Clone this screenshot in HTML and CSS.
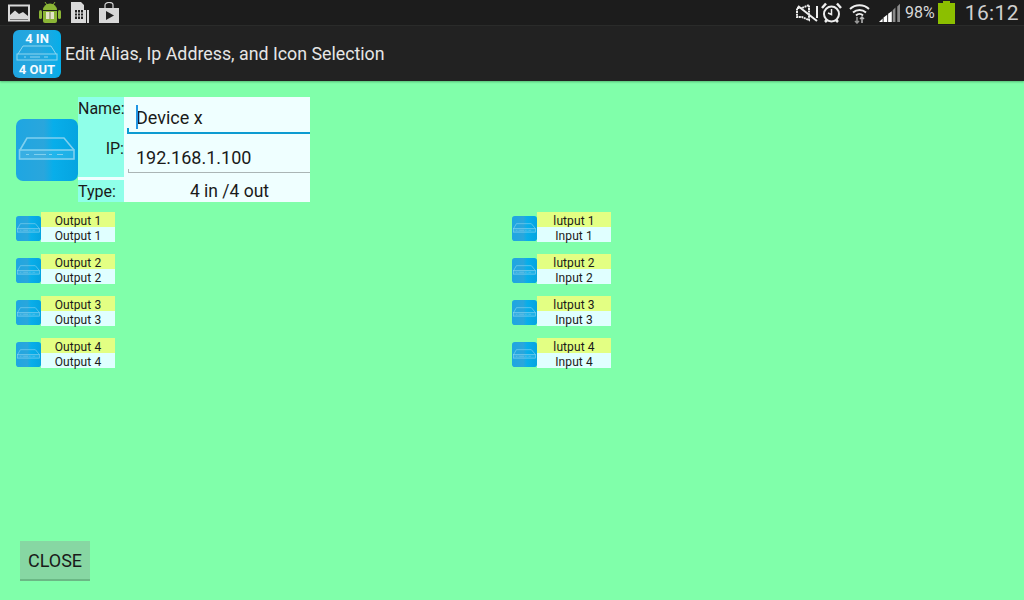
FILE: index.html
```html
<!DOCTYPE html>
<html lang="en">
<head>
<meta charset="utf-8">
<title>Edit Alias</title>
<link rel="stylesheet" href="styles.css">
</head>
<body>
<svg class="defs" width="0" height="0" aria-hidden="true">
  <defs>
    <linearGradient id="blue" x1="0" x2="1" y1="0" y2="0">
      <stop offset="0" stop-color="#1ea6e2"/>
      <stop offset=".45" stop-color="#2aa6dc"/>
      <stop offset=".6" stop-color="#08aeea"/>
      <stop offset="1" stop-color="#05a4e0"/>
    </linearGradient>
    <symbol id="device" viewBox="0 0 62 62">
      <rect width="62" height="62" rx="7" fill="url(#blue)"/>
      <g fill="none" stroke="#7fd0ef" stroke-width="1.600">
        <path d="M4 31 11 19H48L58 31"/>
        <rect x="3.500" y="31" width="54.500" height="9" fill="#ffffff" fill-opacity=".1"/>
        <path d="M10 35.500h3M18 35.500h12M33 35.500h3M41 35.500h6" stroke-width="1"/>
      </g>
    </symbol>
  </defs>
</svg>

<header class="status">
  <div class="status-left">
    <svg width="22" height="18" viewBox="0 0 22 18"><rect x="1" y="1.500" width="20" height="15" fill="none" stroke="#d8d8d8" stroke-width="2"/><path d="M2 15V11L7 6.500 11 10 15 8 20 12V15Z" fill="#d8d8d8"/></svg>
    <svg width="22" height="25" viewBox="0 0 22 25"><path d="M6 2l2 3M16 2l-2 3" stroke="#8bb536" stroke-width="1"/><path d="M4 10a7 6.500 0 0 1 14 0Z" fill="#8bb536"/><path d="M4 11H18V21a2 2 0 0 1-2 2H6a2 2 0 0 1-2-2Z" fill="#8bb536"/><rect x="0" y="10" width="3" height="9" rx="1.500" fill="#8bb536"/><rect x="19" y="10" width="3" height="9" rx="1.500" fill="#8bb536"/><rect x="7" y="12" width="8" height="7" fill="#e3e3c8"/><path d="M11 12v7" stroke="#7a7a50"/></svg>
    <svg width="20" height="23" viewBox="0 0 20 23"><path d="M1 1H11L14 4V9H19V22H1Z" fill="#d8d8d8"/><path d="M5 9H13V18H5Z" fill="#222"/><path d="M7.500 9v9M10.500 9v9M5 12h8M5 15h8" stroke="#d8d8d8"/><path d="M16 9h1v13h-1z" fill="#222"/></svg>
    <svg width="20" height="21" viewBox="0 0 20 21"><path d="M0 6H20V21H0Z" fill="#d8d8d8"/><path d="M6 6V3a4 2.500 0 0 1 8 0V6" fill="none" stroke="#d8d8d8" stroke-width="1.200"/><path d="M7 9 15 13.500 7 18Z" fill="#222"/></svg>
  </div>
  <div class="status-right">
    <svg width="24" height="18" viewBox="0 0 24 18"><path d="M2 4H7L14 1V16L7 13H2Z" fill="none" stroke="#eee" stroke-width="2" stroke-dasharray="2 .6"/><path d="M3 2 22 17M22 2V14" stroke="#eee" stroke-width="2"/></svg>
    <svg class="alarm" width="21" height="22" viewBox="0 0 21 22"><circle cx="10.500" cy="12" r="7.500" fill="none" stroke="#eee" stroke-width="2"/><path d="M10.500 7V12.500L7 11" fill="none" stroke="#eee" stroke-width="1.500"/><path d="M1 6 5 1.500M20 6 16 1.500M4 20l2-2M17 20l-2-2" stroke="#eee" stroke-width="2.500"/></svg>
    <svg class="wifi" width="21" height="22" viewBox="0 0 21 22"><path d="M1 7a14 14 0 0 1 19 0M4 10.500a10 10 0 0 1 13 0M7 13.500a5 5 0 0 1 7 0" fill="none" stroke="#eee" stroke-width="2"/><path d="M8 15v6M6 19l2 2 2-2" fill="none" stroke="#999" stroke-width="1.500"/><path d="M13 21v-6M11 17l2-2 2 2" fill="none" stroke="#bbb" stroke-width="1.500"/></svg>
    <svg class="signal" width="21" height="21" viewBox="0 0 23 21"><path d="M0 21 4 17V21ZM5 16 9 13V21H5ZM10 12 14 9V21H10Z" fill="#fff"/><path d="M15 8 18 5V21H15ZM20 4 23 1V21H20Z" fill="#8a8a8a"/></svg>
    <span class="pct">98%</span>
    <svg width="17" height="23" viewBox="0 0 17 23"><path d="M5 0H12V2H17V23H0V2H5Z" fill="#8cbf00"/></svg>
    <span class="clock">16:12</span>
  </div>
</header>

<div class="appbar">
  <div class="app-icon">
    <span class="app-line">4 IN</span>
    <svg class="app-device" width="42" height="16" viewBox="0 0 42 16"><g fill="none" stroke="#8ed5f0"><path d="M2 9 7 1H35L40 9"/><rect x="1" y="9" width="40" height="6"/><path d="M8 12h2M14 12h10M28 12h4"/></g></svg>
    <span class="app-line">4 OUT</span>
  </div>
  <h1 class="app-title">Edit Alias, Ip Address, and Icon Selection</h1>
</div>

<main class="main">
  <section class="editor">
    <svg class="editor-icon" width="62" height="62"><use href="#device"/></svg>
    <div class="form">
      <div class="form-top">
        <div class="labels">
          <span class="label-name">Name:</span>
          <span class="label-ip">IP:</span>
        </div>
        <div class="fields">
          <div class="field field-active"><span class="caret"></span>Device x</div>
          <div class="field field-plain">192.168.1.100</div>
        </div>
      </div>
      <div class="type-row">
        <span class="type-label">Type:</span>
        <span class="type-value">4 in /4 out</span>
      </div>
    </div>
  </section>

  <section class="ports">
    <div class="port"><svg class="port-icon" width="25" height="25"><use href="#device"/></svg><div class="port-text"><span class="port-alias">Output 1</span><span class="port-name">Output 1</span></div></div>
    <div class="port"><svg class="port-icon" width="25" height="25"><use href="#device"/></svg><div class="port-text"><span class="port-alias">lutput 1</span><span class="port-name">Input 1</span></div></div>
    <div class="port"><svg class="port-icon" width="25" height="25"><use href="#device"/></svg><div class="port-text"><span class="port-alias">Output 2</span><span class="port-name">Output 2</span></div></div>
    <div class="port"><svg class="port-icon" width="25" height="25"><use href="#device"/></svg><div class="port-text"><span class="port-alias">lutput 2</span><span class="port-name">Input 2</span></div></div>
    <div class="port"><svg class="port-icon" width="25" height="25"><use href="#device"/></svg><div class="port-text"><span class="port-alias">Output 3</span><span class="port-name">Output 3</span></div></div>
    <div class="port"><svg class="port-icon" width="25" height="25"><use href="#device"/></svg><div class="port-text"><span class="port-alias">lutput 3</span><span class="port-name">Input 3</span></div></div>
    <div class="port"><svg class="port-icon" width="25" height="25"><use href="#device"/></svg><div class="port-text"><span class="port-alias">Output 4</span><span class="port-name">Output 4</span></div></div>
    <div class="port"><svg class="port-icon" width="25" height="25"><use href="#device"/></svg><div class="port-text"><span class="port-alias">lutput 4</span><span class="port-name">Input 4</span></div></div>
  </section>

  <button class="close" type="button">CLOSE</button>
</main>
</body>
</html>
```

FILE: styles.css
```css
* { box-sizing: border-box; }
html, body { margin: 0; padding: 0; height: 100%; }
body {
  width: 1024px;
  height: 600px;
  overflow: hidden;
  display: flex;
  flex-direction: column;
  background: #80ffaa;
  font-family: Roboto, "Liberation Sans", sans-serif;
  color: #1a1a1a;
}
.defs { display: block; width: 0; height: 0; }

.status {
  height: 26px;
  flex: none;
  background: #1c1c1c;
  border-bottom: 1px solid #2c2c2c;
  display: flex;
  justify-content: space-between;
  align-items: center;
  padding: 0 5px 0 8px;
}
.status-left { display: flex; align-items: center; gap: 9px; }
.status-right { display: flex; align-items: center; gap: 3px; color: #d8d8d8; }
.alarm { margin-left: -1px; }
.wifi { margin-left: 4px; }
.signal { margin-left: 6px; }
.pct { font-size: 16px; margin-left: 2px; }
.clock { font-size: 21px; margin-left: 7px; letter-spacing: .4px; color: #cfcfcf; }

.appbar {
  height: 55px;
  flex: none;
  background: #222;
  display: flex;
  align-items: center;
  padding-left: 13px;
  gap: 4px;
  box-shadow: 0 1px 2px rgba(0, 60, 20, .35);
}
.app-icon {
  width: 48px;
  height: 48px;
  border-radius: 6px;
  background: linear-gradient(90deg, #1ea6e2, #2aa6dc 50%, #06aeea);
  display: flex;
  flex-direction: column;
  align-items: center;
  justify-content: space-between;
  padding: 2px 0 1px;
}
.app-line { font-size: 13px; line-height: 14px; font-weight: 700; color: #f4fbff; white-space: nowrap; }
.app-device { flex: none; margin-top: -2px; }
.app-title {
  margin: 0;
  font-size: 17.800px;
  font-weight: 400;
  color: #e6e6e6;
  white-space: nowrap;
}

.main {
  flex: 1;
  display: flex;
  flex-direction: column;
  align-items: flex-start;
  padding: 16px 0 19px 16px;
}

.editor { display: flex; align-items: flex-start; }
.editor-icon { margin-top: 22px; flex: none; }
.form { width: 232px; background: #efffff; }
.form-top { display: flex; height: 80px; }
.labels {
  width: 46px;
  background: #8fffe9;
  display: flex;
  flex-direction: column;
  font-size: 16px;
}
.label-name { line-height: 24px; text-align: right; white-space: nowrap; }
.label-ip { margin-top: 16px; line-height: 24px; text-align: right; }
.fields { flex: 1; display: flex; flex-direction: column; }
.field { padding-left: 12px; font-size: 18px; display: flex; align-items: center; white-space: nowrap; position: relative; }
.field-active { border-bottom: 2px solid #0c9bd1; margin-left: 3px; padding-left: 9px; padding-top: 5px; height: 37px; }
.field-active::before { content: ""; position: absolute; left: 0; bottom: 0; width: 2px; height: 4px; background: #0c9bd1; }
.caret { position: absolute; left: 9px; top: 8px; width: 2px; height: 24px; background: #2196e3; }
.field-plain { height: 39px; margin-left: 4px; padding-left: 8px; padding-top: 9px; border-bottom: 1px solid #aab5b5; }
.field-plain::before { content: ""; position: absolute; left: 0; bottom: 0; width: 1px; height: 3px; background: #aab5b5; }
.type-row { margin-top: 3px; height: 22px; display: flex; line-height: 23px; }
.type-label { width: 46px; background: #8fffe9; font-size: 16px; white-space: nowrap; }
.type-value { flex: 1; text-align: center; padding-left: 25px; font-size: 17.500px; }

.ports {
  margin-top: 10px;
  display: grid;
  grid-template-columns: 496px 99px;
  row-gap: 12px;
}
.port { display: flex; align-items: flex-start; width: 99px; height: 30px; }
.port-icon { flex: none; margin-top: 4px; }
.port-text { width: 74px; height: 30px; display: flex; flex-direction: column; text-align: center; font-size: 12px; line-height: 18px; letter-spacing: .1px; }
.port-alias { height: 15px; background: #e3ff83; }
.port-name { height: 15px; background: #e0ffff; }

.close {
  margin-top: auto;
  margin-left: 4px;
  width: 70px;
  height: 40px;
  border: 0;
  border-bottom: 2px solid #6bb885;
  background: #87d7a3;
  color: #1a1a1a;
  font: 400 18px Roboto, sans-serif;
  padding: 0;
}
```
